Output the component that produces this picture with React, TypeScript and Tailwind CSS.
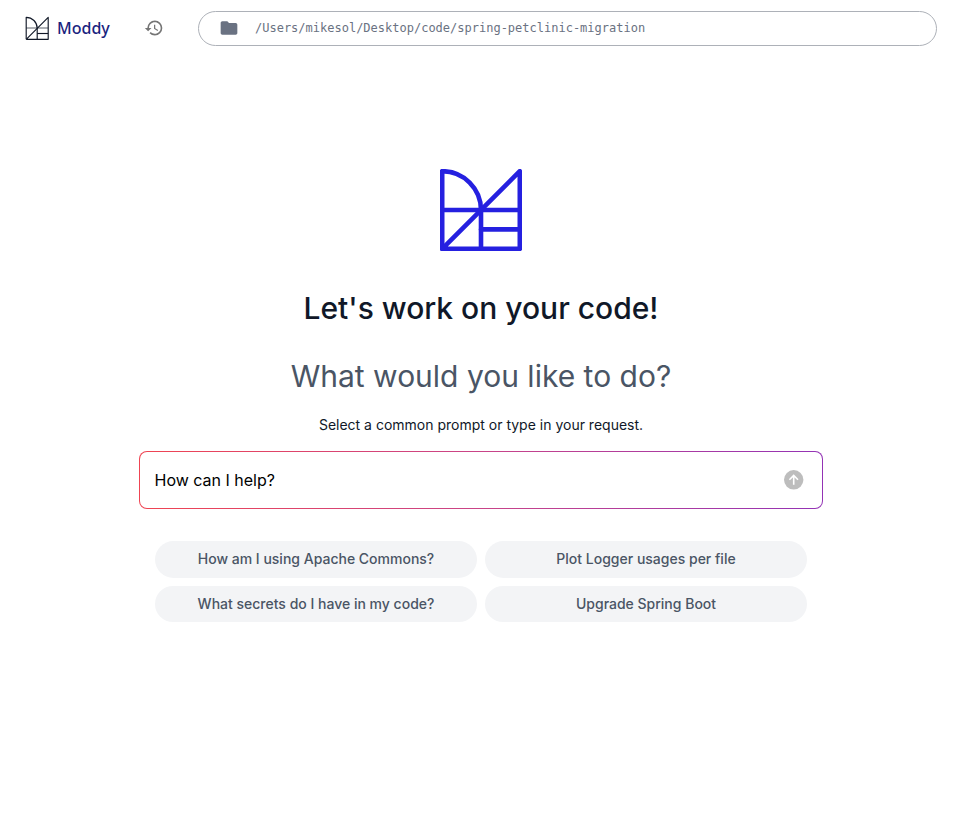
import React from 'react';
import { MdFolder, MdHistory } from 'react-icons/md';

function Logo({ className }: { className: string }) {
  return (
    <svg
      className={className}
      viewBox="0 0 82 82"
      fill="none"
      stroke="currentColor"
      strokeWidth={4.6}
      strokeLinejoin="round"
      strokeLinecap="round"
    >
      <path d="M2.2 79.8V2.2A38.8 38.8 0 0 1 41 41V79.8" />
      <path d="M2.2 79.8L79.8 2.2V79.8H2.2" />
      <path d="M2.2 41H79.8M41 60.4H79.8" />
    </svg>
  );
}

function SmallLogo({ className }: { className: string }) {
  return (
    <svg className={className} viewBox="0 0 24 24" fill="none" stroke="currentColor" strokeWidth="1.15" strokeLinejoin="round">
      <path d="M1.2 23.3V1.3A11 11 0 0 1 12.2 12.3V23.3" />
      <path d="M1.2 23.3L23.2 1.3V23.3H1.2" />
      <path d="M1.2 12H23.2" strokeOpacity="0.6" />
      <path d="M12.2 17.5H23.2" />
    </svg>
  );
}

const prompts = [
  'How am I using Apache Commons?',
  'Plot Logger usages per file',
  'What secrets do I have in my code?',
  'Upgrade Spring Boot',
];

export default function App() {
  return (
    <div className="min-h-[840px] bg-white font-['Inter',sans-serif] text-gray-900">
      <header className="flex h-[57px] items-center pl-[25px] pr-6">
        <SmallLogo className="mb-px h-6 w-6 shrink-0 text-[#111827]" />
        <span className="mb-[2px] ml-2 w-[87px] font-['Noto_Sans',sans-serif] text-base font-medium text-[#1a237e]">Moddy</span>
        <MdHistory className="mb-px h-5 w-5 shrink-0 text-[#757575]" />
        <div className="ml-[34px] flex h-[35px] flex-1 items-center rounded-full border border-[#adb1b8] pl-5">
          <MdFolder className="mb-px h-5 w-5 shrink-0 text-gray-500" />
          <span className="mb-[2px] ml-4 font-['DejaVu_Sans_Mono',monospace] text-xs text-gray-500">
            /Users/mikesol/Desktop/code/spring-petclinic-migration
          </span>
        </div>
      </header>

      <main className="mx-auto flex w-[684px] flex-col items-center pt-[112px]">
        <Logo className="h-[82px] w-[82px] text-[#2520e0]" />
        <h1 className="mt-[39px] pl-px text-[30px] leading-9 font-medium">Let's work on your code!</h1>
        <h2 className="mt-8 pl-px text-[30px] leading-9 text-gray-600">What would you like to do?</h2>
        <p className="mt-[21px] pl-px text-sm leading-5">Select a common prompt or type in your request.</p>
        <div className="mt-4 h-[58px] w-full rounded-lg bg-linear-to-r/srgb from-[#ef4452] via-[#c94488] to-[#9333b5] p-px">
          <div className="flex h-full items-center justify-between rounded-[7px] bg-white pr-[18px] pl-[15px]">
            <span className="text-base text-black">How can I help?</span>
            <svg className="h-5 w-5" viewBox="0 0 20 20" fill="none">
              <circle cx="9.7" cy="9.8" r="9.7" fill="#bdbdbd" />
              <path d="M9.7 14.7V6M5.4 9.8L9.7 5.5L14 9.8" stroke="white" strokeWidth="1.6" />
            </svg>
          </div>
        </div>
        <div className="mt-8 grid w-[652px] grid-cols-2 gap-2">
          {prompts.map((prompt) => (
            <button key={prompt} className="h-[36.5px] rounded-full bg-gray-100 pl-px text-sm font-medium text-gray-600">
              {prompt}
            </button>
          ))}
        </div>
      </main>
    </div>
  );
}
